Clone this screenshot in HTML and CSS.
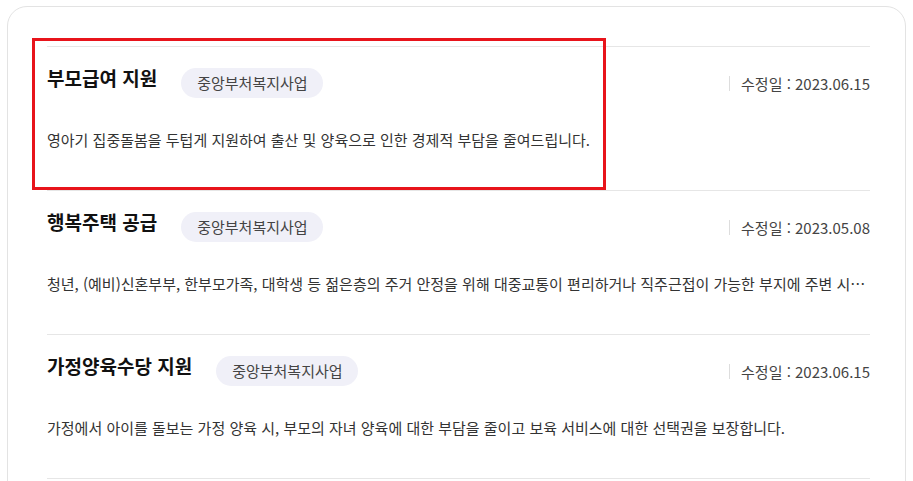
FILE: index.html
```html
<!DOCTYPE html>
<html lang="ko">
<head>
    <meta charset="UTF-8">
    <meta name="viewport" content="width=device-width, initial-scale=1.0">
    <title>복지서비스 목록</title>
    <link rel="stylesheet" href="styles.css">
</head>
<body>
    <div class="card">
        <ul class="welfare-list">
            <li class="welfare-item">
                <div class="item-head">
                    <strong class="item-title">부모급여 지원</strong>
                    <span class="item-tag">중앙부처복지사업</span>
                    <span class="item-date">수정일 <em>:</em> 2023.06.15</span>
                </div>
                <p class="item-desc">영아기 집중돌봄을 두텁게 지원하여 출산 및 양육으로 인한 경제적 부담을 줄여드립니다.</p>
            </li>
            <li class="welfare-item">
                <div class="item-head">
                    <strong class="item-title">행복주택 공급</strong>
                    <span class="item-tag">중앙부처복지사업</span>
                    <span class="item-date">수정일 <em>:</em> 2023.05.08</span>
                </div>
                <p class="item-desc">청년, (예비)신혼부부, 한부모가족, 대학생 등 젊은층의 주거 안정을 위해 대중교통이 편리하거나 직주근접이 가능한 부지에 주변 시세보다 저렴하게 공급하는 공공임대주택입니다.</p>
            </li>
            <li class="welfare-item">
                <div class="item-head">
                    <strong class="item-title">가정양육수당 지원</strong>
                    <span class="item-tag">중앙부처복지사업</span>
                    <span class="item-date">수정일 <em>:</em> 2023.06.15</span>
                </div>
                <p class="item-desc">가정에서 아이를 돌보는 가정 양육 시, 부모의 자녀 양육에 대한 부담을 줄이고 보육 서비스에 대한 선택권을 보장합니다.</p>
            </li>
        </ul>
        <div class="highlight"></div>
    </div>
</body>
</html>
```

FILE: styles.css
```css
body {
    margin: 0;
    padding: 6px 7px 0 7px;
    background: #fff;
    font-family: 'Noto Sans CJK KR', 'Noto Sans', sans-serif;
    color: #333;
}
.card {
    position: relative;
    height: 520px;
    border: 1px solid #e3e3e3;
    border-radius: 20px;
    padding: 39px 35px 0 39px;
}
.welfare-list {
    list-style: none;
    margin: 0;
    padding: 0;
    border-bottom: 1px solid #e6e6e6;
}
.welfare-item {
    box-sizing: border-box;
    height: 144px;
    border-top: 1px solid #e6e6e6;
    padding-top: 21px;
}
.item-head {
    display: flex;
    align-items: center;
    height: 30px;
}
.item-title {
    align-self: flex-start;
    font-size: 19px;
    line-height: 20px;
    font-weight: bold;
    color: #111;
}
.item-tag {
    margin-left: 24px;
    height: 30px;
    line-height: 30px;
    padding: 0 15px 0 16px;
    border-radius: 15px;
    background: #f0f0f8;
    font-size: 15px;
    color: #444;
}
.item-date {
    margin-left: auto;
    padding-left: 11px;
    border-left: 1px solid #ddd;
    font-size: 15px;
    line-height: 15px;
    color: #444;
}
.item-date em {
    font-style: normal;
}
.item-desc {
    margin: 30px 0 0;
    font-size: 15px;
    line-height: 24px;
    color: #333;
    white-space: nowrap;
    overflow: hidden;
    text-overflow: ellipsis;
}
.highlight {
    position: absolute;
    left: 24px;
    top: 31px;
    width: 568px;
    height: 146px;
    border: 3px solid #e8141b;
}
```
